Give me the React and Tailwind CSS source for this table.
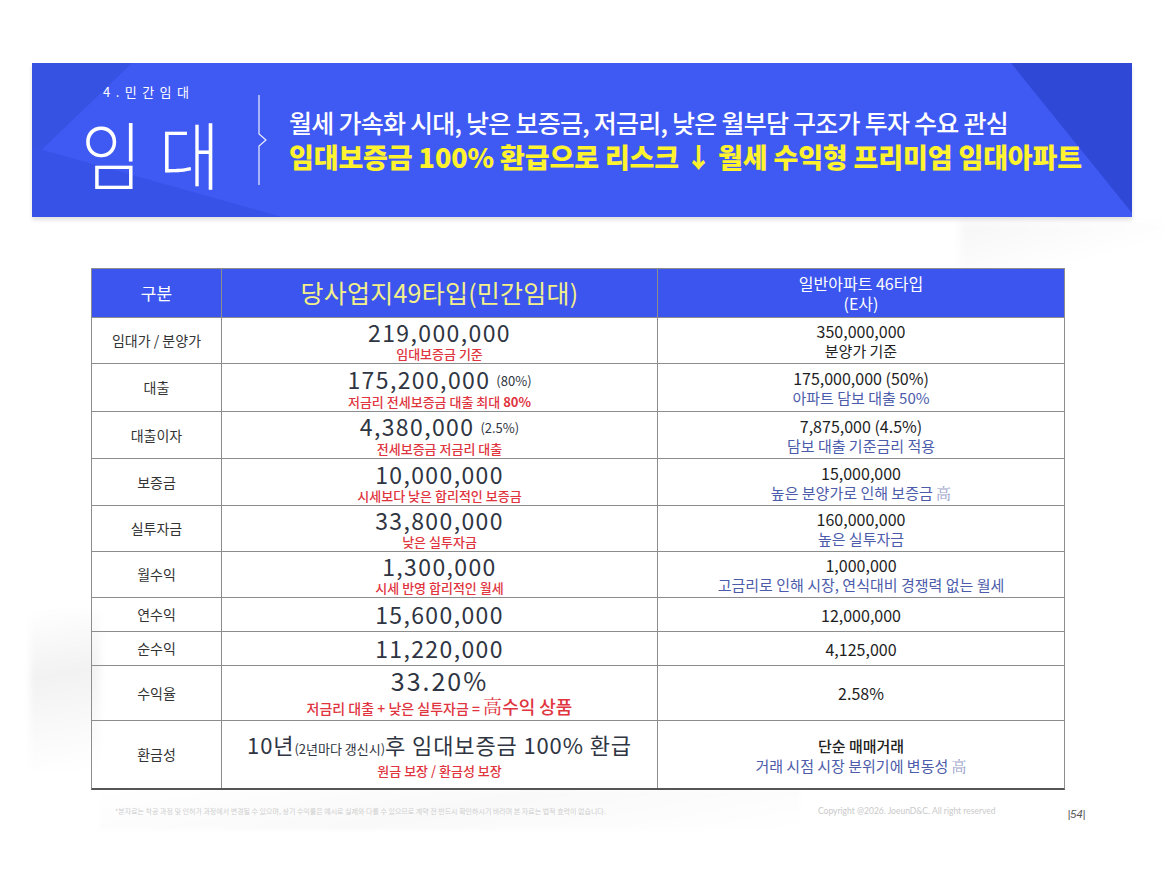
import React from "react";

const Num = ({ children, small }) => (
  <div className="text-[23px] leading-[27px] tracking-[0.06em] text-[#2f3542] font-normal">
    {children}
    {small && <span className="text-[13px] tracking-normal ml-[6px] align-[3px]">{small}</span>}
  </div>
);
const Red = ({ children }) => (
  <div className="text-[13px] leading-[16px] text-[#e0343e] font-medium">{children}</div>
);
const BNum = ({ children }) => (
  <div className="text-[16px] leading-[20px] text-[#1e1e1e]">{children}</div>
);
const Blue = ({ children }) => (
  <div className="text-[15px] leading-[19px] text-[#4c5cab]">{children}</div>
);
const Dark = ({ children }) => (
  <div className="text-[15px] leading-[19px] text-[#222]">{children}</div>
);

const rows = [
  {
    label: "임대가 / 분양가",
    h: "h-[46px]",
    a: (<><Num>219,000,000</Num><Red>임대보증금 기준</Red></>),
    b: (<><BNum>350,000,000</BNum><Dark>분양가 기준</Dark></>),
  },
  {
    label: "대출",
    h: "h-[48px]",
    a: (<><Num small="(80%)">175,200,000</Num><Red>저금리 전세보증금 대출 최대 <span className="font-bold">80%</span></Red></>),
    b: (<><BNum>175,000,000 (50%)</BNum><Blue>아파트 담보 대출 50%</Blue></>),
  },
  {
    label: "대출이자",
    h: "h-[47px]",
    a: (<><Num small="(2.5%)">4,380,000</Num><Red>전세보증금 저금리 대출</Red></>),
    b: (<><BNum>7,875,000 (4.5%)</BNum><Blue>담보 대출 기준금리 적용</Blue></>),
  },
  {
    label: "보증금",
    h: "h-[47px]",
    a: (<><Num>10,000,000</Num><Red>시세보다 낮은 합리적인 보증금</Red></>),
    b: (<><BNum>15,000,000</BNum><Blue>높은 분양가로 인해 보증금 <span className="text-[#9aa3cc] font-['Noto_Serif_CJK_KR','Noto_Sans_CJK_KR',serif]">高</span></Blue></>),
  },
  {
    label: "실투자금",
    h: "h-[46px]",
    a: (<><Num>33,800,000</Num><Red>낮은 실투자금</Red></>),
    b: (<><BNum>160,000,000</BNum><Blue>높은 실투자금</Blue></>),
  },
  {
    label: "월수익",
    h: "h-[46px]",
    a: (<><Num>1,300,000</Num><Red>시세 반영 합리적인 월세</Red></>),
    b: (<><BNum>1,000,000</BNum><Blue>고금리로 인해 시장, 연식대비 경쟁력 없는 월세</Blue></>),
  },
  {
    label: "연수익",
    h: "h-[34px]",
    a: (<Num>15,600,000</Num>),
    b: (<BNum>12,000,000</BNum>),
  },
  {
    label: "순수익",
    h: "h-[34px]",
    a: (<Num>11,220,000</Num>),
    b: (<BNum>4,125,000</BNum>),
  },
  {
    label: "수익율",
    h: "h-[55px]",
    a: (
      <>
        <div className="text-[25px] leading-[28px] tracking-[0.08em] text-[#2f3542]">33.20%</div>
        <div className="text-[14px] leading-[23px] text-[#e0343e] font-medium">
          저금리 대출 + 낮은 실투자금 ={" "}
          <span className="text-[19px] font-['Noto_Serif_CJK_KR','Noto_Sans_CJK_KR',serif] font-normal">高</span>
          <span className="text-[18px]">수익 상품</span>
        </div>
      </>
    ),
    b: (<BNum>2.58%</BNum>),
  },
  {
    label: "환금성",
    h: "h-[67px]",
    a: (
      <>
        <div className="text-[22px] leading-[28px] tracking-[0.04em] text-[#2f3542]">
          10년<span className="text-[13px] tracking-normal">(2년마다 갱신시)</span>후 임대보증금 100% 환급
        </div>
        <Red>원금 보장 / 환금성 보장</Red>
      </>
    ),
    b: (
      <>
        <div className="text-[15px] leading-[21px] text-[#222] font-medium">단순 매매거래</div>
        <Blue>거래 시점 시장 분위기에 변동성 <span className="text-[#9aa3cc] font-['Noto_Serif_CJK_KR','Noto_Sans_CJK_KR',serif]">高</span></Blue>
      </>
    ),
  },
];

export default function App() {
  return (
    <div className="relative w-[1164px] h-[889px] bg-white overflow-hidden font-['Noto_Sans_CJK_KR','Noto_Sans',sans-serif]">
      {/* faint background swooshes */}
      <div className="absolute left-[30px] top-[610px] w-[70px] h-[160px] bg-[linear-gradient(170deg,rgba(0,0,0,0)_0%,rgba(0,0,0,0.05)_40%,rgba(0,0,0,0.025)_70%,rgba(0,0,0,0)_100%)] blur-[3px]" />
      <div className="absolute left-[960px] top-[222px] w-[204px] h-[50px] bg-[linear-gradient(165deg,rgba(0,0,0,0.035)_0%,rgba(0,0,0,0)_70%)] blur-[4px]" />
      <div className="absolute left-[100px] top-[790px] w-[700px] h-[40px] bg-[linear-gradient(170deg,rgba(0,0,0,0)_0%,rgba(0,0,0,0.025)_50%,rgba(0,0,0,0)_100%)] blur-[2px]" />

      {/* Banner */}
      <div className="relative ml-[32px] mt-[63px] w-[1100px] h-[154px] bg-[#3f59f3] flex shadow-[0_3px_4px_rgba(0,0,0,0.12)] overflow-hidden">
        <svg className="absolute inset-0" width="1100" height="154" viewBox="0 0 1100 154">
          <polygon points="0,0 100,0 0,96" fill="#3652e3" />
          <polygon points="0,84 0,154 250,154" fill="#3752e6" />
          <polygon points="979,0 1100,0 1100,150" fill="#2f48d6" />
        </svg>
        <div className="relative w-[226px] pl-[49px] pt-[20px] flex flex-col text-white">
          <div className="ml-[22px] text-[13px] leading-[18px] tracking-[0.42em] whitespace-nowrap">4.민간임대</div>
          <div className="mt-[14px] text-[66px] leading-[66px] font-light tracking-[0.02em] scale-y-[1.12] origin-top whitespace-nowrap">임 대</div>
        </div>
        <svg className="relative self-center" width="12" height="92" viewBox="0 0 12 92">
          <path d="M1 1 V40 L8 46 L1 52 V91" fill="none" stroke="#ffffff" strokeWidth="1.2" opacity="0.9" />
        </svg>
        <div className="relative pl-[19px] flex flex-col justify-center">
          <div className="text-[25px] leading-[34px] text-white font-medium tracking-[-0.03em] whitespace-nowrap">
            월세 가속화 시대, 낮은 보증금, 저금리, 낮은 월부담 구조가 투자 수요 관심
          </div>
          <div className="text-[27px] leading-[36px] text-[#fff22e] font-black tracking-[-0.005em] whitespace-nowrap">
            임대보증금 100% 환급으로 리스크 ↓ 월세 수익형 프리미엄 임대아파트
          </div>
        </div>
      </div>

      {/* Table */}
      <div className="relative ml-[91px] mt-[51px] w-[974px] border border-[#8d8d8d] border-b-2 border-b-[#555]">
        <div className="flex h-[49px] bg-[#3b55ee] border-b border-[#8d8d8d]">
          <div className="w-[130px] flex items-center justify-center text-white text-[17px] border-r border-[#8d8d8d]">구분</div>
          <div className="w-[436px] flex items-center justify-center text-[#f3f08a] text-[25px] tracking-[0.01em] border-r border-[#8d8d8d]">당사업지49타입(민간임대)</div>
          <div className="flex-1 flex flex-col items-center justify-center text-white text-[16px] leading-[20px]">
            <div>일반아파트 46타입</div>
            <div>(E사)</div>
          </div>
        </div>
        {rows.map((r, i) => (
          <div key={i} className={`flex ${r.h} ${i < rows.length - 1 ? "border-b border-[#8d8d8d]" : ""}`}>
            <div className="w-[130px] flex items-center justify-center text-[14px] text-[#333] border-r border-[#8d8d8d]">{r.label}</div>
            <div className="w-[436px] flex flex-col items-center justify-center text-center border-r border-[#8d8d8d] whitespace-nowrap">{r.a}</div>
            <div className="flex-1 flex flex-col items-center justify-center text-center whitespace-nowrap">{r.b}</div>
          </div>
        ))}
      </div>

      {/* Footer */}
      <div className="relative flex items-center mt-[13px] h-[16px]">
        <div className="ml-[115px] w-[680px] text-[7px] leading-[10px] text-[#cfcfcf] whitespace-nowrap overflow-hidden">
          *본자료는 착공 과정 및 인허가 과정에서 변경될 수 있으며, 상기 수익률은 예시로 실제와 다를 수 있으므로 계약 전 반드시 확인하시기 바라며 본 자료는 법적 효력이 없습니다.
        </div>
        <div className="ml-[23px] text-[8.5px] text-[#c9c9c9] font-['Lato',sans-serif] whitespace-nowrap">Copyright @2026. JoeunD&amp;C. All right reserved</div>
        <div className="ml-[72px] mt-[6px] text-[11px] italic text-[#555] font-['Liberation_Sans',sans-serif]">|54|</div>
      </div>
    </div>
  );
}
